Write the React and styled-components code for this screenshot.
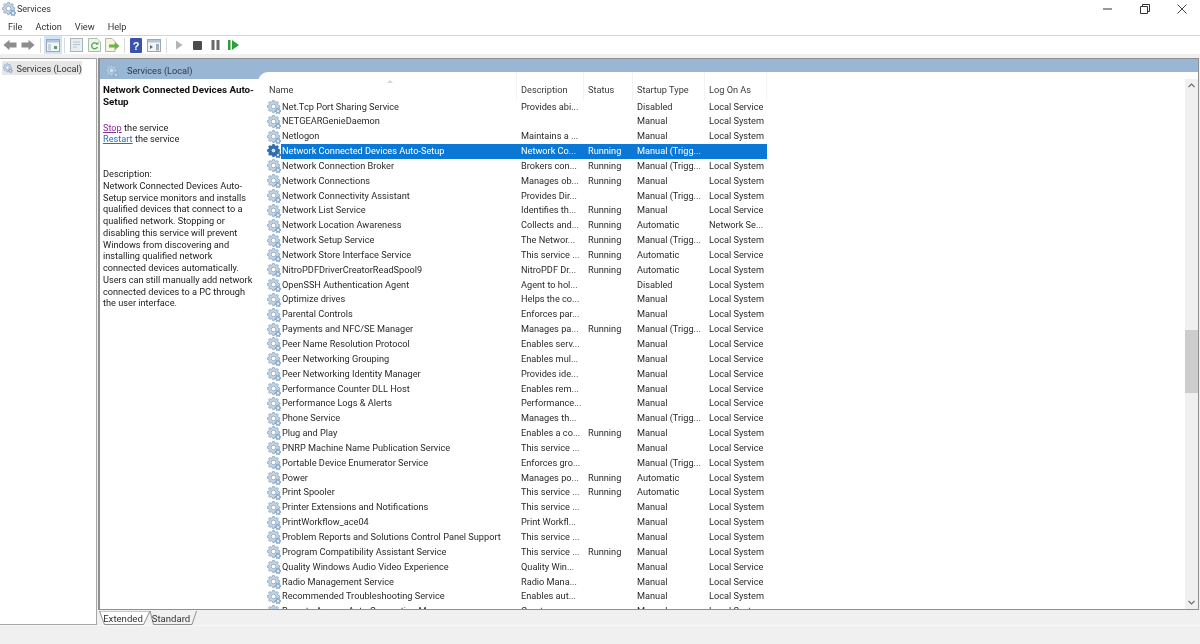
import React from 'react'
import styled, { createGlobalStyle } from 'styled-components'

const GlobalStyle = createGlobalStyle`
  html, body { margin: 0; padding: 0; background: #fff; }
  * { box-sizing: border-box; }
`;

const Window = styled.div`
  width: 1200px;
  height: 644px;
  overflow: hidden;
  display: flex;
  flex-direction: column;
  background: #f0f0f0;
  font-family: Roboto, "Noto Sans", sans-serif;
  font-size: 9.2px;
  color: #222;
  filter: blur(0.3px);
`;

const TitleBar = styled.div`
  height: 18px;
  flex: none;
  display: flex;
  align-items: center;
  gap: 1px;
  padding-left: 2px;
  background: #fff;
  font-size: 9px;
  color: #333;
`;

const TitleText = styled.span`
  flex: 1;
`;

const WindowButton = styled.div`
  width: 36px;
  height: 18px;
  display: flex;
  align-items: center;
  justify-content: center;
`;

const MenuBar = styled.div`
  height: 18px;
  flex: none;
  display: flex;
  align-items: center;
  gap: 13px;
  padding-left: 8px;
  background: #fff;
  border-bottom: 1px solid #d4d4d4;
  color: #333;
`;

const Toolbar = styled.div`
  height: 18px;
  flex: none;
  display: flex;
  align-items: center;
  padding-left: 1px;
  background: #fff;
`;

const ToolButton = styled.div`
  width: 18px;
  height: 18px;
  display: flex;
  align-items: center;
  justify-content: center;
  background: ${p => (p.$active ? '#cfe4f6' : 'transparent')};
`;

const ToolSep = styled.div`
  width: 1px;
  height: 15px;
  margin: 0 ${p => p.$gap || 3}px;
  background: #d9d9d9;
`;

const Body = styled.div`
  height: 567px;
  margin-top: 4px;
  flex: none;
  display: flex;
  gap: 1px;
`;

const TreePane = styled.div`
  width: 97px;
  flex: none;
  padding: 2px 0 0 2px;
  background: #fff;
  border: 1px solid #a6a6a6;
  border-left: 0;
`;

const TreeItem = styled.div`
  width: 80px;
  height: 14px;
  display: flex;
  align-items: center;
  gap: 4px;
  padding-left: 1px;
  background: #e6e6e6;
  color: #333;
  white-space: nowrap;
`;

const Main = styled.div`
  flex: 1;
  display: flex;
  flex-direction: column;
  min-width: 0;
`;

const ServicesPane = styled.div`
  height: 552px;
  flex: none;
  display: flex;
  flex-direction: column;
  background: #fff;
  border: 1px solid #8f8f8f;
  border-width: 1px 1px 1px 2px;
  margin-right: 1px;
`;

const PaneHeader = styled.div`
  height: 20px;
  flex: none;
  display: flex;
  align-items: center;
  gap: 8px;
  padding: 3px 0 0 5px;
  background: #9ab6d5;
  color: #2b3a4a;
`;

const PaneIcon = styled.div`
  display: flex;
  opacity: 0.55;
`;

const PaneBody = styled.div`
  flex: 1;
  display: flex;
  min-height: 0;
`;

const InfoPanel = styled.div`
  width: 158px;
  flex: none;
  padding: 5px 0 0 3px;
  line-height: 11.75px;
  white-space: nowrap;
`;

const InfoTitle = styled.div`
  font-weight: 700;
  font-size: 9.8px;
  line-height: 12px;
  color: #111;
  margin-bottom: 13.5px;
  white-space: normal;
`;

const InfoLine = styled.div`
  margin-bottom: ${p => p.$after || 0}px;
`;

const Action = styled.span`
  text-decoration: underline;
  color: ${p => (p.$visited ? '#8b2f9c' : '#2a6fc0')};
`;

const ListPane = styled.div`
  flex: 1;
  display: flex;
  min-width: 0;
  margin-top: -7px;
  background: #fff;
  border-top-left-radius: 10px;
`;

const ListArea = styled.div`
  flex: 1;
  min-width: 0;
  overflow: hidden;
`;

const ColumnHeader = styled.div`
  height: 27.5px;
  margin-left: 7px;
  display: grid;
  grid-template-columns: 252px 67px 49px 72px 62px;
  justify-content: start;
  position: relative;
`;

const ColumnTitle = styled.div`
  padding: 11.5px 0 0 4px;
  color: #3a3a3a;
  border-right: 1px solid #f3f3f3;
`;

const SortMark = styled.span`
  position: absolute;
  left: 122px;
  top: 8px;
  width: 0;
  height: 0;
  border: 3px solid transparent;
  border-top: 0;
  border-bottom: 3px solid #d4d4d4;
`;

const Row = styled.div`
  height: 14.85px;
  padding-left: 9px;
  display: flex;
  align-items: center;
`;

const RowIcon = styled.div`
  width: 14px;
  height: 14px;
  flex: none;
  display: flex;
`;

const RowBody = styled.div`
  display: grid;
  grid-template-columns: 236px 67px 49px 72px 62px;
  height: 14.85px;
  align-items: center;
  white-space: nowrap;
  line-height: 14.85px;
  background: ${p => (p.$selected ? '#0a78d4' : 'transparent')};
  color: ${p => (p.$selected ? '#fff' : '#2a2a2a')};
`;

const Cell = styled.div`
  padding-left: ${p => (p.$first ? 1 : 4)}px;
`;

const ScrollBar = styled.div`
  width: 13px;
  flex: none;
  margin-top: 7px;
  display: flex;
  flex-direction: column;
  align-items: center;
  background: #f0f0f0;
`;

const ScrollArrow = styled.div`
  height: 13px;
  flex: none;
  display: flex;
  align-items: center;
  justify-content: center;
`;

const ScrollTrack = styled.div`
  flex: 1;
  width: 100%;
  padding-top: ${p => p.$offset}px;
`;

const ScrollThumb = styled.div`
  height: 63px;
  background: #cdcdcd;
`;

const TabBar = styled.div`
  flex: 1;
  display: flex;
  padding: 1px 0 0 1px;
`;

const Tab = styled.div`
  position: relative;
  width: ${p => p.$width}px;
  height: 14px;
  margin-right: -2px;
  padding-right: 4px;
  display: flex;
  align-items: center;
  justify-content: center;
  color: #333;
  font-size: 9.6px;
`;

const TabShape = styled.svg`
  position: absolute;
  inset: 0;
  width: 100%;
  height: 100%;
`;

const TabLabel = styled.span`
  position: relative;
`;

const StatusBar = styled.div`
  flex: 1;
  background: #f0f0f0;
  border-top: 1px solid #f7f7f7;
`;

const gearPath = (cx, cy, outer, inner, teeth) => {
  const step = (Math.PI * 2) / teeth;
  const pts = [];
  for (let i = 0; i < teeth; i++) {
    const a = i * step;
    [[-0.3, inner], [-0.16, outer], [0.16, outer], [0.3, inner]].forEach(([k, r]) => {
      pts.push(`${(cx + Math.cos(a + k * step) * r).toFixed(2)} ${(cy + Math.sin(a + k * step) * r).toFixed(2)}`);
    });
  }
  return `M${pts.join('L')}Z`;
};

const BIG_GEAR = gearPath(6.5, 6.5, 6.2, 4.9, 8);
const SMALL_GEAR = gearPath(11, 11, 3, 2.2, 6);

const GearIcon = ({ dark }) => (
  <svg width="14" height="14" viewBox="0 0 14 14">
    <path d={BIG_GEAR} fill={dark ? '#2f6fb0' : '#c2d4e5'} stroke={dark ? '#1d5a9a' : '#7f9cb9'} strokeWidth="0.7" />
    <circle cx="6.5" cy="6.5" r="2.3" fill={dark ? '#cfe2f5' : '#fff'} stroke={dark ? '#1d5a9a' : '#7f9cb9'} strokeWidth="0.7" />
    <path d={SMALL_GEAR} fill={dark ? '#3f7fc0' : '#98b8d6'} stroke={dark ? '#1d5a9a' : '#6f90b0'} strokeWidth="0.5" />
    <circle cx="11" cy="11" r="0.9" fill="#fff" />
  </svg>
);

const ArrowIcon = ({ flip }) => (
  <svg width="14" height="12" viewBox="0 0 14 12" style={flip ? { transform: 'scaleX(-1)' } : undefined}>
    <path d="M0.5 6L6.5 0.8V3.6H13.5V8.4H6.5V11.2Z" fill="#8d8d8d" />
  </svg>
);

const TreeViewIcon = () => (
  <svg width="14" height="13" viewBox="0 0 14 13">
    <rect x="0.5" y="0.5" width="13" height="12" fill="#f4f4f4" stroke="#9aa8b5" />
    <rect x="1" y="1" width="12" height="2.5" fill="#b3c5d6" />
    <rect x="2" y="5" width="3" height="6.5" fill="#c7d3dd" />
    <rect x="8" y="7" width="3" height="3" fill="#5f9a6c" />
  </svg>
);

const PropsIcon = () => (
  <svg width="13" height="14" viewBox="0 0 13 14">
    <rect x="0.5" y="0.5" width="12" height="13" fill="#e9eef2" stroke="#a9b4bd" />
    <path d="M3 4H10M3 6.5H10M3 9H7" stroke="#bcc6ce" />
  </svg>
);

const RefreshIcon = () => (
  <svg width="13" height="14" viewBox="0 0 13 14">
    <path d="M0.5 0.5H9L12.5 4V13.5H0.5Z" fill="#eef7ee" stroke="#a9bda9" />
    <path d="M9.2 6.2A3 3 0 1 0 9.4 9" fill="none" stroke="#4aa552" strokeWidth="1.3" />
    <path d="M7.6 6.6H10.4V3.8Z" fill="#4aa552" />
  </svg>
);

const ExportIcon = () => (
  <svg width="15" height="14" viewBox="0 0 15 14">
    <path d="M0.5 0.5H7L10 3.5V13.5H0.5Z" fill="#f7f3e2" stroke="#bdb695" />
    <path d="M4 6.5H10V4L14.5 8L10 12V9.5H4Z" fill="#6cb34a" />
  </svg>
);

const HelpIcon = () => (
  <svg width="12" height="15" viewBox="0 0 12 15">
    <rect width="12" height="15" rx="1" fill="#3a52a8" />
    <text x="6" y="11.5" textAnchor="middle" fontSize="11" fontWeight="700" fontFamily="Liberation Sans, sans-serif" fill="#fff">?</text>
  </svg>
);

const ActionPaneIcon = () => (
  <svg width="14" height="13" viewBox="0 0 14 13">
    <rect x="0.5" y="0.5" width="13" height="12" fill="#f4f4f4" stroke="#9aa8b5" />
    <rect x="1" y="1" width="12" height="2.5" fill="#b3c5d6" />
    <rect x="9" y="5" width="3" height="6.5" fill="#a0aeba" />
    <path d="M3 6L6 8L3 10Z" fill="#5a6a78" />
  </svg>
);

const PlayIcon = () => (
  <svg width="8" height="10" viewBox="0 0 8 10">
    <path d="M1 0.5L7.5 5L1 9.5Z" fill="#b4b4b4" />
  </svg>
);

const StopIcon = () => (
  <svg width="9" height="9" viewBox="0 0 9 9">
    <rect width="9" height="9" rx="1" fill="#4c4c4c" />
  </svg>
);

const PauseIcon = () => (
  <svg width="9" height="10" viewBox="0 0 9 10">
    <path d="M0.5 0H3.5V10H0.5ZM5.5 0H8.5V10H5.5Z" fill="#6a6a6a" />
  </svg>
);

const ResumeIcon = () => (
  <svg width="11" height="10" viewBox="0 0 11 10">
    <path d="M0 0H2.5V10H0ZM4 0L11 5L4 10Z" fill="#2f9e3f" />
  </svg>
);

const MinimizeIcon = () => (
  <svg width="10" height="10" viewBox="0 0 10 10">
    <path d="M0 5H9" stroke="#333" />
  </svg>
);

const RestoreIcon = () => (
  <svg width="10" height="10" viewBox="0 0 10 10">
    <path d="M0.5 2.5H7.5V9.5H0.5ZM2.5 2.5V0.5H9.5V7.5H7.5" fill="none" stroke="#333" />
  </svg>
);

const CloseIcon = () => (
  <svg width="10" height="10" viewBox="0 0 10 10">
    <path d="M0.5 0.5L9.5 9.5M9.5 0.5L0.5 9.5" stroke="#444" />
  </svg>
);

const Chevron = ({ down }) => (
  <svg width="7" height="5" viewBox="0 0 7 5">
    <path d={down ? 'M0.5 1L3.5 4L6.5 1' : 'M0.5 4L3.5 1L6.5 4'} fill="none" stroke="#6e6e6e" strokeWidth="1.2" />
  </svg>
);

const COLUMNS = ['Name', 'Description', 'Status', 'Startup Type', 'Log On As'];

const SERVICES = [
  ['Net.Tcp Port Sharing Service', 'Provides abi...', '', 'Disabled', 'Local Service'],
  ['NETGEARGenieDaemon', '', '', 'Manual', 'Local System'],
  ['Netlogon', 'Maintains a ...', '', 'Manual', 'Local System'],
  ['Network Connected Devices Auto-Setup', 'Network Co...', 'Running', 'Manual (Trigg...', ''],
  ['Network Connection Broker', 'Brokers con...', 'Running', 'Manual (Trigg...', 'Local System'],
  ['Network Connections', 'Manages ob...', 'Running', 'Manual', 'Local System'],
  ['Network Connectivity Assistant', 'Provides Dir...', '', 'Manual (Trigg...', 'Local System'],
  ['Network List Service', 'Identifies th...', 'Running', 'Manual', 'Local Service'],
  ['Network Location Awareness', 'Collects and...', 'Running', 'Automatic', 'Network Se...'],
  ['Network Setup Service', 'The Networ...', 'Running', 'Manual (Trigg...', 'Local System'],
  ['Network Store Interface Service', 'This service ...', 'Running', 'Automatic', 'Local Service'],
  ['NitroPDFDriverCreatorReadSpool9', 'NitroPDF Dr...', 'Running', 'Automatic', 'Local System'],
  ['OpenSSH Authentication Agent', 'Agent to hol...', '', 'Disabled', 'Local System'],
  ['Optimize drives', 'Helps the co...', '', 'Manual', 'Local System'],
  ['Parental Controls', 'Enforces par...', '', 'Manual', 'Local System'],
  ['Payments and NFC/SE Manager', 'Manages pa...', 'Running', 'Manual (Trigg...', 'Local Service'],
  ['Peer Name Resolution Protocol', 'Enables serv...', '', 'Manual', 'Local Service'],
  ['Peer Networking Grouping', 'Enables mul...', '', 'Manual', 'Local Service'],
  ['Peer Networking Identity Manager', 'Provides ide...', '', 'Manual', 'Local Service'],
  ['Performance Counter DLL Host', 'Enables rem...', '', 'Manual', 'Local Service'],
  ['Performance Logs & Alerts', 'Performance...', '', 'Manual', 'Local Service'],
  ['Phone Service', 'Manages th...', '', 'Manual (Trigg...', 'Local Service'],
  ['Plug and Play', 'Enables a co...', 'Running', 'Manual', 'Local System'],
  ['PNRP Machine Name Publication Service', 'This service ...', '', 'Manual', 'Local Service'],
  ['Portable Device Enumerator Service', 'Enforces gro...', '', 'Manual (Trigg...', 'Local System'],
  ['Power', 'Manages po...', 'Running', 'Automatic', 'Local System'],
  ['Print Spooler', 'This service ...', 'Running', 'Automatic', 'Local System'],
  ['Printer Extensions and Notifications', 'This service ...', '', 'Manual', 'Local System'],
  ['PrintWorkflow_ace04', 'Print Workfl...', '', 'Manual', 'Local System'],
  ['Problem Reports and Solutions Control Panel Support', 'This service ...', '', 'Manual', 'Local System'],
  ['Program Compatibility Assistant Service', 'This service ...', 'Running', 'Manual', 'Local System'],
  ['Quality Windows Audio Video Experience', 'Quality Win...', '', 'Manual', 'Local Service'],
  ['Radio Management Service', 'Radio Mana...', '', 'Manual', 'Local Service'],
  ['Recommended Troubleshooting Service', 'Enables aut...', '', 'Manual', 'Local System'],
  ['Remote Access Auto Connection Manager', 'Creates a c...', '', 'Manual', 'Local System'],
];

const DESCRIPTION = [
  'Network Connected Devices Auto-',
  'Setup service monitors and installs',
  'qualified devices that connect to a',
  'qualified network. Stopping or',
  'disabling this service will prevent',
  'Windows from discovering and',
  'installing qualified network',
  'connected devices automatically.',
  'Users can still manually add network',
  'connected devices to a PC through',
  'the user interface.',
];

const SELECTED = 3;

const App = () => (
  <Window>
    <GlobalStyle />
    <TitleBar>
      <GearIcon />
      <TitleText>Services</TitleText>
      <WindowButton><MinimizeIcon /></WindowButton>
      <WindowButton><RestoreIcon /></WindowButton>
      <WindowButton><CloseIcon /></WindowButton>
    </TitleBar>
    <MenuBar>
      <span>File</span>
      <span>Action</span>
      <span>View</span>
      <span>Help</span>
    </MenuBar>
    <Toolbar>
      <ToolButton><ArrowIcon /></ToolButton>
      <ToolButton><ArrowIcon flip /></ToolButton>
      <ToolSep $gap={3} />
      <ToolButton $active><TreeViewIcon /></ToolButton>
      <ToolSep $gap={2} />
      <ToolButton><PropsIcon /></ToolButton>
      <ToolButton><RefreshIcon /></ToolButton>
      <ToolButton><ExportIcon /></ToolButton>
      <ToolSep $gap={2.5} />
      <ToolButton><HelpIcon /></ToolButton>
      <ToolButton><ActionPaneIcon /></ToolButton>
      <ToolSep $gap={3} />
      <ToolButton><PlayIcon /></ToolButton>
      <ToolButton><StopIcon /></ToolButton>
      <ToolButton><PauseIcon /></ToolButton>
      <ToolButton><ResumeIcon /></ToolButton>
    </Toolbar>
    <Body>
      <TreePane>
        <TreeItem><GearIcon /><span>Services (Local)</span></TreeItem>
      </TreePane>
      <Main>
        <ServicesPane>
          <PaneHeader>
            <PaneIcon><GearIcon /></PaneIcon>
            <span>Services (Local)</span>
          </PaneHeader>
          <PaneBody>
            <InfoPanel>
              <InfoTitle>Network Connected Devices Auto-Setup</InfoTitle>
              <InfoLine><Action $visited>Stop</Action> the service</InfoLine>
              <InfoLine $after={23}><Action>Restart</Action> the service</InfoLine>
              <InfoLine>Description:</InfoLine>
              {DESCRIPTION.map(line => <InfoLine key={line}>{line}</InfoLine>)}
            </InfoPanel>
            <ListPane>
              <ListArea>
                <ColumnHeader>
                  {COLUMNS.map(col => <ColumnTitle key={col}>{col}</ColumnTitle>)}
                  <SortMark />
                </ColumnHeader>
                {SERVICES.map((service, i) => (
                  <Row key={service[0]}>
                    <RowIcon><GearIcon dark={i === SELECTED} /></RowIcon>
                    <RowBody $selected={i === SELECTED}>
                      {service.map((text, c) => <Cell key={c} $first={c === 0}>{text}</Cell>)}
                    </RowBody>
                  </Row>
                ))}
              </ListArea>
              <ScrollBar>
                <ScrollArrow><Chevron /></ScrollArrow>
                <ScrollTrack $offset={238}><ScrollThumb /></ScrollTrack>
                <ScrollArrow><Chevron down /></ScrollArrow>
              </ScrollBar>
            </ListPane>
          </PaneBody>
        </ServicesPane>
        <TabBar>
          <Tab $width={52}>
            <TabShape viewBox="0 0 52 14">
              <path d="M0.5 0L5.5 13.5H44.5L51 0Z" fill="#fff" stroke="#8f8f8f" />
            </TabShape>
            <TabLabel>Extended</TabLabel>
          </Tab>
          <Tab $width={48}>
            <TabShape viewBox="0 0 48 14">
              <path d="M1 0L4.5 13.5H43L47.5 0" fill="none" stroke="#8f8f8f" />
            </TabShape>
            <TabLabel>Standard</TabLabel>
          </Tab>
        </TabBar>
      </Main>
    </Body>
    <StatusBar />
  </Window>
);

export default App;
